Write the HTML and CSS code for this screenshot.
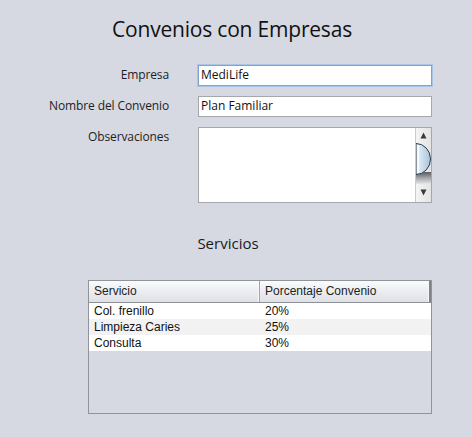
FILE: index.html
```html
<!DOCTYPE html>
<html lang="es">
<head>
<meta charset="utf-8">
<title>Convenios con Empresas</title>
<link rel="stylesheet" href="styles.css">
</head>
<body>
<div class="panel">
  <h1 class="title">Convenios con Empresas</h1>
  <div class="form">
    <div class="label">Empresa</div>
    <div class="field focused">MediLife</div>
    <div class="label">Nombre del Convenio</div>
    <div class="field">Plan Familiar</div>
    <div class="label">Observaciones</div>
    <div class="textarea">
      <div class="textarea-body"></div>
      <div class="scrollbar">
        <svg width="15" height="74" viewBox="0 0 15 74" xmlns="http://www.w3.org/2000/svg">
          <defs>
            <linearGradient id="knob" x1="0" y1="0" x2="1" y2="0">
              <stop offset="0" stop-color="#eef4fa"/>
              <stop offset="0.5" stop-color="#c9dcec"/>
              <stop offset="1" stop-color="#a9c3d9"/>
            </linearGradient>
            <linearGradient id="shade" x1="0" y1="0" x2="0" y2="1">
              <stop offset="0" stop-color="#5a5c60"/>
              <stop offset="0.5" stop-color="#a4a6aa"/>
              <stop offset="1" stop-color="#e6e6e6"/>
            </linearGradient>
            <linearGradient id="track" x1="0" y1="0" x2="1" y2="0">
              <stop offset="0" stop-color="#f4f4f4"/>
              <stop offset="1" stop-color="#e4e4e4"/>
            </linearGradient>
          </defs>
          <rect x="0" y="0" width="15" height="74" fill="url(#track)"/>
          <path d="M4.5 10.5 L10.5 10.5 L7.5 4.5 Z" fill="#3a3a3a"/>
          <rect x="0" y="44" width="15" height="12" fill="url(#shade)"/>
          <path d="M0 15.5 A14.5 15.5 0 0 1 0 46.5 Z" fill="url(#knob)" stroke="#2b3a48" stroke-width="1"/>
          <rect x="1.5" y="17" width="1.5" height="28" fill="#ffffff" opacity="0.9"/>
          <path d="M4.5 61.5 L10.5 61.5 L7.5 67.5 Z" fill="#3a3a3a"/>
        </svg>
      </div>
    </div>
  </div>
  <h2 class="subtitle">Servicios</h2>
  <div class="table">
    <div class="thead">
      <div class="th">Servicio</div>
      <div class="th">Porcentaje Convenio</div>
    </div>
    <div class="tr">
      <div class="td">Col. frenillo</div>
      <div class="td">20%</div>
    </div>
    <div class="tr alt">
      <div class="td">Limpieza Caries</div>
      <div class="td">25%</div>
    </div>
    <div class="tr">
      <div class="td">Consulta</div>
      <div class="td">30%</div>
    </div>
  </div>
</div>
</body>
</html>
```

FILE: styles.css
```css
html, body {
  margin: 0;
  padding: 0;
}
body {
  background: #d6d9e1;
  width: 472px;
  height: 437px;
  overflow: hidden;
  font-family: "Open Sans", "Noto Sans", sans-serif;
  color: #1b1b1b;
}
.panel {
  padding-top: 14px;
}
.title {
  margin: 0;
  width: 464px;
  text-align: center;
  font-family: "Open Sans", sans-serif;
  font-weight: 400;
  font-size: 21px;
  letter-spacing: -0.2px;
  line-height: 30px;
  color: #111;
}
.form {
  margin-top: 21px;
  display: grid;
  grid-template-columns: 169px 234px;
  column-gap: 29px;
  row-gap: 10px;
  align-items: start;
}
.label {
  font-size: 12px;
  line-height: 19px;
  letter-spacing: -0.12px;
  text-align: right;
  color: #1e1e1e;
}
.field {
  box-sizing: border-box;
  height: 21px;
  background: #fff;
  border: 1px solid #a5a7ab;
  padding: 0 2px 2px 2px;
  font-size: 12px;
  line-height: 17px;
  color: #111;
}
.field.focused {
  border-color: #7ea3cf;
  box-shadow: 0 0 0 1px #a9c6e8;
}
.textarea {
  box-sizing: border-box;
  height: 76px;
  border: 1px solid #a5a7ab;
  background: #fff;
  display: flex;
}
.textarea-body {
  flex: 1;
}
.scrollbar {
  width: 15px;
  border-left: 1px solid #c9cacd;
  display: flex;
}
.scrollbar svg {
  display: block;
}
.subtitle {
  margin: 30px 0 0 0;
  width: 456px;
  text-align: center;
  font-family: "Open Sans", sans-serif;
  font-weight: 400;
  font-size: 15px;
  line-height: 20px;
  color: #1a1a1a;
}
.table {
  box-sizing: border-box;
  margin: 27px 0 0 88px;
  width: 344px;
  height: 134px;
  border: 1px solid #90939a;
  background: #d6d9e1;
  font-family: "Liberation Sans", Arial, sans-serif;
  font-size: 12px;
}
.thead {
  display: grid;
  grid-template-columns: 171px 1fr;
  height: 22px;
  box-sizing: border-box;
  border-bottom: 1px solid #8c8f96;
  background: linear-gradient(#fbfbfc, #eceef1 45%, #dfe1e5);
}
.th {
  line-height: 21px;
  padding-left: 5px;
  color: #222;
  border-right: 1px solid #a2a5ab;
  box-shadow: inset -1px 0 0 #f7f7f8;
}
.th:last-child {
  border-right: 2px solid #7f8289;
}
.tr {
  display: grid;
  grid-template-columns: 171px 1fr;
  height: 16px;
  background: #fff;
}
.tr.alt {
  background: #f2f2f2;
}
.td {
  line-height: 16px;
  padding-left: 5px;
  color: #111;
}
```
